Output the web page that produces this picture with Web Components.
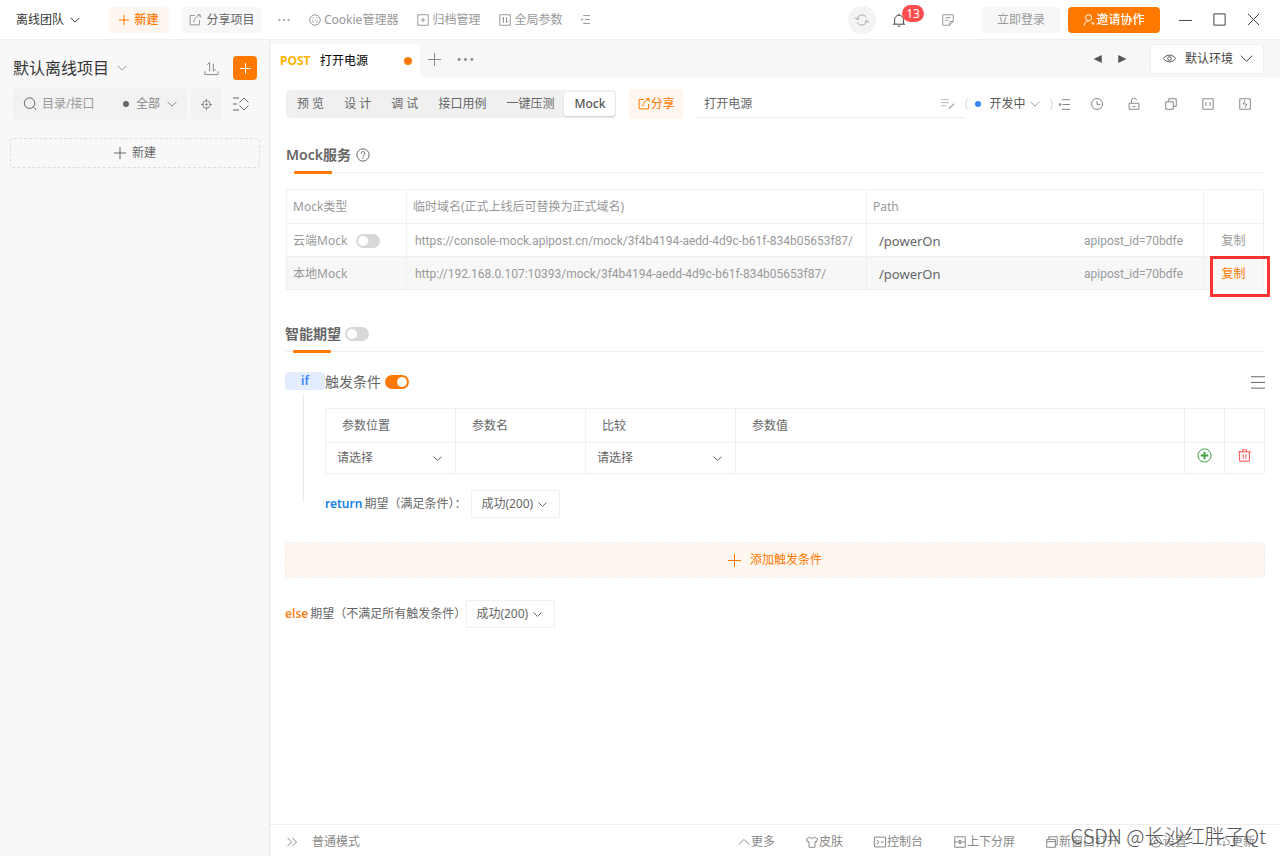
<!DOCTYPE html>
<html lang="zh-CN">
<head>
<meta charset="utf-8">
<title>打开电源 - Mock</title>
<style>
  html, body { margin: 0; height: 100%; }
  body {
    font: 12px/18px "Noto Sans", "Noto Sans CJK SC", sans-serif;
    color: #666;
    background: #fff;
    --accent: #ff7800;
    --line: #f0f0f0;
  }
</style>
</head>
<body>
<ap-app>
  <ap-topbar slot="top"></ap-topbar>
  <ap-sidebar slot="side"></ap-sidebar>
  <ap-tabs></ap-tabs>
  <ap-toolbar></ap-toolbar>
  <ap-section class="first">
    <span slot="title">Mock服务</span>
    <ap-icon slot="extra" name="help" size="14"></ap-icon>
    <ap-mock-table></ap-mock-table>
  </ap-section>
  <ap-section class="second">
    <span slot="title">智能期望</span>
    <ap-switch slot="extra" label="智能期望"></ap-switch>
    <ap-rules></ap-rules>
  </ap-section>
  <ap-statusbar slot="bottom"></ap-statusbar>
</ap-app>

<script>
const BASE = `
  :host, *, *::before, *::after { box-sizing: border-box; }
  button, input, select { font: inherit; color: inherit; border: 0; background: none; margin: 0; padding: 0; outline: 0; }
  button { display: inline-flex; align-items: center; justify-content: center; white-space: nowrap; cursor: pointer; }
  a { color: inherit; text-decoration: none; }
`;

function define(name, css, html, setup) {
  const template = document.createElement('template');
  template.innerHTML = `<style>${BASE}${css}</style>${html}`;
  customElements.define(name, class extends HTMLElement {
    constructor() {
      super();
      this.attachShadow({ mode: 'open' }).append(template.content.cloneNode(true));
    }
    connectedCallback() { if (setup) setup(this, this.shadowRoot); }
  });
}

const ICONS = {
  down: '<path d="M1 4.500l7 7 7-7"/>',
  up: '<path d="M1 11.500l7-7 7 7"/>',
  plus: '<path d="M8 0v16M0 8h16"/>',
  dots: '<g fill="currentColor" stroke="none"><circle cx="2" cy="8" r="1.400"/><circle cx="8" cy="8" r="1.400"/><circle cx="14" cy="8" r="1.400"/></g>',
  share: '<path d="M8 2H1.500v12.500H14V8M11 1h4v4M14.500 1.500C10 3 7 6 6 11"/>',
  cookie: '<circle cx="8" cy="8" r="7"/><path d="M4.500 5.500l2-1.500M9.500 4l2 1.500M4.500 8.500l1.500 3M8 7.500l1 1.500M11.500 9L10 12"/>',
  archive: '<path d="M1 1h14v14H1zM8 5v6M5 8h6"/>',
  params: '<path d="M1 1h14v14H1zM6 12V4.500L4 6.500M10 4v7.500l2-2"/>',
  indent: '<path d="M4 1h12M7 8h9M4 15h12"/><path d="M0 6l5 2-5 2z" fill="currentColor" stroke="none"/>',
  outdent: '<path d="M4 1h12M5 8h11M4 15h12"/><path d="M0 5.500l4 2.500-4 2.500z" fill="currentColor" stroke="none"/>',
  sync: '<path d="M2.200 7A6 6 0 0 1 13.200 5M13.800 9A6 6 0 0 1 2.800 11M0 5l2.200 2.500L5 6M16 11l-2.200-2.500L11 10"/>',
  bell: '<path d="M3 12.500V7.500a5 5 0 0 1 10 0v5M1 12.800h14M8 2.500V.800M6.500 15h3"/>',
  note: '<path d="M15 9.500V1H1v14h9.500zM10.500 15v-5H15M4.500 5h7M4.500 8.500h4"/>',
  user: '<circle cx="7.500" cy="5" r="4"/><path d="M1.500 15.500c.5-4 3-6.500 6-6.500M10.500 12h4.500M13 15l2-2.500"/>',
  minimize: '<path d="M1 9h14"/>',
  maximize: '<path d="M2 2h12v12H2z"/>',
  close: '<path d="M2 2l12 12M14 2L2 14"/>',
  transfer: '<path d="M1 11v3.500h14V11M6 11V1.500L3.500 4M10 3v8l2.500-2.500"/>',
  search: '<circle cx="7.500" cy="7" r="6"/><path d="M12 11.500l3.500 3.500"/>',
  target: '<circle cx="8" cy="8" r="5.500"/><circle cx="8" cy="8" r="1.200" fill="currentColor"/><path d="M8 0v4M8 12v4M0 8h4M12 8h4"/>',
  collapse: '<path d="M0 2h6M0 8h4M0 14h6M6.500 6.500L11 2l4.500 4.500M6.500 9.500L11 14l4.500-4.500"/>',
  left: '<path d="M14 1.500v13L1 8z" fill="currentColor" stroke="none"/>',
  right: '<path d="M2 1.500v13L15 8z" fill="currentColor" stroke="none"/>',
  eye: '<path d="M.500 8C4 2.500 12 2.500 15.500 8 12 13.500 4 13.500.500 8z"/><circle cx="8" cy="8" r="2.300"/>',
  edit: '<path d="M0 3h9M0 6.500h9M0 10h6"/><path d="M8 14l1-2.500 5.500-4.500 1.300 1.300L10.500 13z" fill="currentColor" stroke="none"/>',
  clock: '<circle cx="8" cy="8" r="7.300"/><path d="M8 4v4.500h4.500"/>',
  lock: '<path d="M1.500 7h13v8h-13zM4.500 7V4.500a3.500 3.500 0 0 1 7-1.500M6 11.500h4"/>',
  copy: '<path d="M1 5h10v10H1zM5 5V1h10v10h-4"/>',
  code: '<path d="M1 1h14v14H1zM6.500 5.500L4 8l2.500 2.500M9.500 5.500L12 8l-2.500 2.500"/>',
  bolt: '<path d="M1 1h14v14H1z"/><path d="M8 3L5.500 8h5L8 13"/>',
  help: '<circle cx="8" cy="8" r="7"/><path d="M5.800 6.300a2.200 2.200 0 1 1 3.300 1.900c-.8.500-1.100.9-1.100 1.600M8 11v1.500"/>',
  menu: '<path d="M0 2h16M0 8.500h16M0 15h16"/>',
  add: '<circle cx="8" cy="8" r="7"/><path d="M8 4v8M4 8h8" stroke-width="2"/>',
  trash: '<path d="M0 3.500h16M2 3.500V15h12V3.500M5.500 3.500V1h5v2.500M6.300 6.500v5.500M9.700 6.500v5.500"/>',
  more: '<path d="M2 2.500L7.500 8 2 13.500M8.500 2.500L14 8l-5.500 5.500"/>',
  shirt: '<path d="M5 1.500L.500 4l1.500 4 2-.7V15h8V7.300l2 .7 1.500-4L11 1.500c-1 2-5 2-6 0z"/>',
  console: '<path d="M.500 1.500h15v13H.500zM3.500 5L6.500 8l-3 3M9 8h4"/>',
  split: '<path d="M1 1h14v14H1zM1 8h14M8 6v4M6.500 6h3M6.500 10h3"/>',
  window: '<path d="M1 4.500h11.500V15H1zM3.500 4.500V1H15v11h-2.500M1 7.500h11.500"/>',
  gear: '<path d="M4.500 1.500h7L15.300 8l-3.800 6.500h-7L.700 8z"/><circle cx="8" cy="8" r="2.500"/>',
  update: '<path d="M4 11.500a3.500 3.500 0 0 1 0-7 4.500 4.500 0 0 1 8.500 1A3 3 0 0 1 12 11.500M8 6.500v7M5.500 11L8 13.500l2.500-2.500"/>'
};

/* Line icon on a 16-unit grid; size is the drawn side in pixels. */
define('ap-icon', `
  :host { display: inline-flex; flex: none; }
  svg { display: block; fill: none; stroke: currentColor; overflow: visible; }
`, '<svg viewBox="0 0 16 16" aria-hidden="true"></svg>', (el, root) => {
  const size = +(el.getAttribute('size') || 12);
  const svg = root.querySelector('svg');
  svg.setAttribute('width', size);
  svg.setAttribute('height', size);
  svg.setAttribute('stroke-width', 16 / size);
  svg.innerHTML = ICONS[el.getAttribute('name')];
});

define('ap-switch', `
  :host { display: inline-flex; flex: none; }
  input { appearance: none; display: flex; width: 24px; height: 14px; padding: 2px; border-radius: 7px; background: #d8d8d8; cursor: pointer; }
  input::before { content: ""; width: 10px; height: 10px; border-radius: 5px; background: #fff; }
  input:checked { background: var(--accent); justify-content: flex-end; }
`, '<input type="checkbox" role="switch">', (el, root) => {
  const input = root.querySelector('input');
  input.setAttribute('aria-label', el.getAttribute('label'));
  input.checked = el.hasAttribute('on');
});

/* Drop-down whose arrow shares the select's grid cell. */
define('ap-select', `
  :host { display: inline-grid; align-items: center; --gap: 16px; --arrow-color: currentColor; }
  select { grid-area: 1 / 1; appearance: none; width: 100%; height: 100%; padding-right: var(--gap); cursor: pointer; }
  ap-icon { grid-area: 1 / 1; justify-self: end; pointer-events: none; color: var(--arrow-color); }
`, '<select><option></option></select><ap-icon name="down" size="10"></ap-icon>', (el, root) => {
  root.querySelector('option').textContent = el.getAttribute('value');
  root.querySelector('select').setAttribute('aria-label', el.getAttribute('label'));
  if (el.hasAttribute('arrow')) {
    const icon = document.createElement('ap-icon');
    icon.setAttribute('name', 'down');
    icon.setAttribute('size', el.getAttribute('arrow'));
    root.querySelector('ap-icon').replaceWith(icon);
  }
});

define('ap-app', `
  :host { display: grid; grid-template: auto 1fr / 270px minmax(0, 1fr); min-height: 100vh; }
  header { grid-column: 1 / 3; }
  aside { background: #f8f8f8; border-right: 1px solid #e8e8e8; }
  .work { display: flex; flex-direction: column; min-width: 0; }
  main { flex: 1; }
`, `
  <header><slot name="top"></slot></header>
  <aside><slot name="side"></slot></aside>
  <div class="work"><main><slot></slot></main><slot name="bottom"></slot></div>
`);

define('ap-topbar', `
  :host { display: flex; align-items: center; height: 40px; border-bottom: 1px solid #eee; padding: 0 19px 0 16px; color: #999; }
  .team { color: #333; --gap: 15px; margin-right: 29px; }
  .btn { height: 26px; border-radius: 4px; gap: 5px; }
  .new { width: 60px; color: var(--accent); background: #fff6f0; margin-right: 13px; font-weight: 500; }
  .share { width: 80px; color: #666; background: #f7f7f7; margin-right: 16px; }
  .share ap-icon { color: #999; }
  nav { display: flex; gap: 19px; align-items: center; }
  nav button { gap: 3px; }
  .right { margin-left: auto; display: flex; align-items: center; }
  .sync { width: 28px; height: 28px; border-radius: 14px; background: #f4f4f4; color: #aaa; margin-right: 16px; }
  .bell { position: relative; color: #444; margin-right: 36px; }
  .badge { position: absolute; left: 10px; top: -8px; height: 17px; width: 22px; border-radius: 9px; background: #ff4d4f; color: #fff; line-height: 17px; text-align: center; }
  .login { width: 78px; background: #f7f7f7; margin: 0 8px 0 28px; }
  .invite { width: 92px; background: var(--accent); color: #fff; gap: 1px; margin-right: 18px; font-weight: 500; }
  .win { display: flex; gap: 19px; color: #444; }
`, `
  <ap-select class="team" value="离线团队" label="团队"></ap-select>
  <button class="btn new"><ap-icon name="plus" size="10"></ap-icon>新建</button>
  <button class="btn share"><ap-icon name="share" size="12"></ap-icon>分享项目</button>
  <nav>
    <button aria-label="更多"><ap-icon name="dots" size="12"></ap-icon></button>
    <button><ap-icon name="cookie" size="12"></ap-icon>Cookie管理器</button>
    <button><ap-icon name="archive" size="12"></ap-icon>归档管理</button>
    <button><ap-icon name="params" size="12"></ap-icon>全局参数</button>
    <button aria-label="收起"><ap-icon name="indent" size="9"></ap-icon></button>
  </nav>
  <div class="right">
    <button class="sync" aria-label="同步"><ap-icon name="sync" size="14"></ap-icon></button>
    <button class="bell" aria-label="消息 13"><ap-icon name="bell" size="14"></ap-icon><span class="badge">13</span></button>
    <button aria-label="文档"><ap-icon name="note" size="12"></ap-icon></button>
    <button class="btn login">立即登录</button>
    <button class="btn invite"><ap-icon name="user" size="12"></ap-icon>邀请协作</button>
    <div class="win">
      <button aria-label="最小化"><ap-icon name="minimize" size="15"></ap-icon></button>
      <button aria-label="最大化"><ap-icon name="maximize" size="15"></ap-icon></button>
      <button aria-label="关闭"><ap-icon name="close" size="15"></ap-icon></button>
    </div>
  </div>
`);

define('ap-sidebar', `
  :host { display: block; padding: 16px 9px 0 10px; }
  .title { display: flex; align-items: center; height: 24px; padding: 0 3px; }
  .project { font-size: 16px; color: #333; --gap: 17px; --arrow-color: #999; height: 24px; }
  .transfer { margin-left: auto; margin-right: 14px; color: #888; }
  .add { width: 24px; height: 24px; border-radius: 4px; background: var(--accent); color: #fff; }
  .find { display: flex; align-items: center; gap: 4px; padding: 0 3px; margin: 8px 0 18px; height: 32px; }
  .box { flex: 1; min-width: 0; display: flex; align-items: center; height: 32px; padding: 0 10px; border-radius: 4px; background: #f2f2f2; }
  .box input { flex: 1; width: 0; margin-left: 5px; }
  .box input::placeholder { color: #999; opacity: 1; }
  .dot { width: 6px; height: 6px; border-radius: 3px; background: #666; margin-right: 7px; }
  .all { color: #888; --gap: 16px; }
  .aim { width: 30px; height: 32px; border-radius: 4px; background: #f2f2f2; color: #888; }
  .fold { width: 32px; color: #666; }
  .new { width: 100%; height: 30px; border: 1px dashed #ddd; border-radius: 4px; gap: 6px; }
`, `
  <div class="title">
    <ap-select class="project" value="默认离线项目" label="项目"></ap-select>
    <button class="transfer" aria-label="导入导出"><ap-icon name="transfer" size="15"></ap-icon></button>
    <button class="add" aria-label="新建"><ap-icon name="plus" size="11"></ap-icon></button>
  </div>
  <div class="find">
    <div class="box">
      <ap-icon name="search" size="14"></ap-icon>
      <input type="text" placeholder="目录/接口" aria-label="目录/接口">
      <span class="dot"></span>
      <ap-select class="all" value="全部" label="类型"></ap-select>
    </div>
    <button class="aim" aria-label="定位"><ap-icon name="target" size="11"></ap-icon></button>
    <button class="fold" aria-label="折叠"><ap-icon name="collapse" size="16"></ap-icon></button>
  </div>
  <button class="new"><ap-icon name="plus" size="12"></ap-icon>新建</button>
`);

define('ap-tabs', `
  :host { display: flex; align-items: center; height: 37px; background: #f7f7f7; padding-right: 16px; color: #888; }
  .tab { align-self: flex-end; width: 150px; height: 33px; padding: 0 8px 0 10px; display: flex; align-items: center; background: #fff; border-radius: 4px 4px 0 0; color: #000; margin-right: 8px; }
  b { width: 40px; color: #ffb400; }
  i { margin-left: auto; width: 8px; height: 8px; border-radius: 4px; background: var(--accent); }
  .tools { display: flex; gap: 16px; padding-top: 2px; }
  .right { margin-left: auto; display: flex; align-items: center; gap: 14px; color: #555; }
  .env { display: flex; align-items: center; gap: 9px; height: 30px; padding: 0 10px 0 12px; margin-left: 9px; background: #fff; border: 1px solid #eee; border-radius: 4px; }
  .env ap-select { --gap: 19px; color: #444; }
`, `
  <a class="tab" href="#"><b>POST</b><span>打开电源</span><i></i></a>
  <div class="tools">
    <button aria-label="新标签"><ap-icon name="plus" size="13"></ap-icon></button>
    <button aria-label="更多"><ap-icon name="dots" size="17"></ap-icon></button>
  </div>
  <div class="right">
    <button aria-label="上一个"><ap-icon name="left" size="10"></ap-icon></button>
    <button aria-label="下一个"><ap-icon name="right" size="10"></ap-icon></button>
    <div class="env"><ap-icon name="eye" size="13"></ap-icon><ap-select value="默认环境" label="环境" arrow="13"></ap-select></div>
  </div>
`);

define('ap-toolbar', `
  :host { display: flex; align-items: center; padding: 12px 16px 0 16px; height: 42px; }
  .seg { display: flex; align-items: center; height: 28px; padding: 0 1px; border-radius: 4px; background: #f0f0f0; margin-right: 13px; }
  .seg button { height: 24px; padding: 0 10px; }
  .seg .on { background: #fff; border-radius: 3px; font-weight: 500; color: #555; box-shadow: 0 1px 2px #ccc; }
  .share { width: 54px; height: 30px; border-radius: 4px; color: var(--accent); background: #fff6f0; margin-right: 13px; gap: 1px; }
  .name { flex: 1; min-width: 0; display: flex; align-items: center; height: 28px; padding: 0 10px 0 8px; border-bottom: 1px solid #eee; color: #bbb; }
  .name input { flex: 1; width: 0; color: #666; }
  .paren { color: #ddd; }
  .dot { width: 6px; height: 6px; border-radius: 3px; background: #3a84ff; margin: 0 8px 0 7px; }
  .state { --gap: 14px; --arrow-color: #999; color: #555; margin-right: 9px; }
  .toc { margin: 0 21px 0 6px; color: #888; }
  .acts { display: flex; gap: 25px; color: #888; padding-right: 13px; }
`, `
  <div class="seg">
    <button>预 览</button><button>设 计</button><button>调 试</button><button>接口用例</button><button>一键压测</button><button class="on">Mock</button>
  </div>
  <button class="share"><ap-icon name="share" size="12"></ap-icon>分享</button>
  <div class="name"><input type="text" value="打开电源" aria-label="接口名称"><ap-icon name="edit" size="14"></ap-icon></div>
  <span class="paren">(</span><span class="dot"></span>
  <ap-select class="state" value="开发中" label="状态"></ap-select>
  <span class="paren">)</span>
  <button class="toc" aria-label="目录"><ap-icon name="outdent" size="11"></ap-icon></button>
  <div class="acts">
    <button aria-label="历史"><ap-icon name="clock" size="12"></ap-icon></button>
    <button aria-label="锁定"><ap-icon name="lock" size="12"></ap-icon></button>
    <button aria-label="复制"><ap-icon name="copy" size="12"></ap-icon></button>
    <button aria-label="代码"><ap-icon name="code" size="12"></ap-icon></button>
    <button aria-label="快捷"><ap-icon name="bolt" size="12"></ap-icon></button>
  </div>
`);

define('ap-section', `
  :host { display: block; padding: 26px 16px 0; }
  :host(.second) { padding: 34px 15px 0; }
  header { display: flex; align-items: center; height: 28px; border-bottom: 1px solid var(--line); padding-bottom: 7px; gap: 5px; position: relative; margin-bottom: 16px; }
  :host(.second) header { gap: 4px; margin-bottom: 20px; }
  header::after { content: ""; position: absolute; left: 8px; bottom: -2px; width: 38px; height: 3px; border-radius: 1px; background: var(--accent); }
  h2 { margin: 0; font-size: 14px; line-height: 20px; font-weight: 600; color: #666; }
`, `
  <header><h2><slot name="title"></slot></h2><slot name="extra"></slot></header>
  <slot></slot>
`);

define('ap-mock-table', `
  :host { display: block; color: #999; }
  table { width: 100%; table-layout: fixed; border-collapse: collapse; }
  th, td { border: 1px solid var(--line); padding: 0 6px; font-weight: 400; text-align: left; height: 33px; white-space: nowrap; }
  th { height: 34px; }
  td { padding-top: 2px; }
  .kind { display: flex; align-items: center; gap: 9px; }
  .url { padding-left: 8px; }
  .url, .path span { font-family: Roboto, "Noto Sans", sans-serif; }
  .path { display: flex; justify-content: space-between; padding: 0 14px 0 6px; }
  .path b { font-weight: 400; font-size: 13px; color: #666; }
  .last { position: relative; text-align: center; padding: 2px 16px 0; }
  tr.hot { background: #f7f7f7; }
  .hot button { color: var(--accent); }
  .mark { position: absolute; left: 6px; top: -1px; width: 60px; height: 41px; border: 3px solid #ff3333; pointer-events: none; }
`, `
  <table>
    <colgroup><col style="width:120px"><col style="width:460px"><col><col style="width:60px"></colgroup>
    <thead><tr><th>Mock类型</th><th>临时域名(正式上线后可替换为正式域名)</th><th>Path</th><th></th></tr></thead>
    <tbody>
      <tr><td><div class="kind">云端Mock<ap-switch label="云端Mock"></ap-switch></div></td>
        <td class="url">https://console-mock.apipost.cn/mock/3f4b4194-aedd-4d9c-b61f-834b05653f87/</td>
        <td><div class="path"><b>/powerOn</b><span>apipost_id=70bdfe</span></div></td>
        <td class="last"><button>复制</button></td></tr>
      <tr class="hot"><td>本地Mock</td>
        <td class="url">http://192.168.0.107:10393/mock/3f4b4194-aedd-4d9c-b61f-834b05653f87/</td>
        <td><div class="path"><b>/powerOn</b><span>apipost_id=70bdfe</span></div></td>
        <td class="last"><button>复制</button><span class="mark"></span></td></tr>
    </tbody>
  </table>
`);

define('ap-rules', `
  :host { display: block; }
  .rule { display: grid; grid-template-columns: 40px minmax(0, 1fr); }
  .if { height: 18px; border-radius: 4px; background: #e3edff; color: #3a84ff; font-weight: 600; text-align: center; }
  .rail { width: 1px; margin: 2px 0 16px 18px; background: #e8e8e8; }
  .cond { display: flex; align-items: center; height: 20px; gap: 4px; font-size: 14px; }
  .cond button { margin-left: auto; }
  table { width: 100%; table-layout: fixed; border-collapse: collapse; margin: 16px 0; }
  th, td { border: 1px solid var(--line); font-weight: 400; text-align: left; padding: 0; height: 31px; }
  th { height: 34px; padding: 0 16px; }
  td > ap-select { display: grid; height: 30px; padding: 0 13px 0 11px; }
  td input { width: 100%; height: 30px; padding: 0 11px; }
  td > button { width: 100%; height: 30px; padding-bottom: 6px; }
  .green { color: #43a047; } .red { color: #ff4d4f; }
  .then { display: flex; align-items: center; height: 28px; }
  .then ap-select { height: 28px; border: 1px solid var(--line); padding: 0 12px 0 9px; --gap: 14px; }
  b { font-weight: 600; margin-right: 2px; }
  .ret { color: #1682e6; }
  .ret + span { margin-right: 5px; }
  .else { color: #fa8320; }
  .add { width: 100%; height: 36px; margin: 24px 0 22px; border: 1px dashed #eee; border-radius: 4px; background: #fff6f0; color: var(--accent); gap: 9px; }
`, `
  <div class="rule">
    <div class="if">if</div>
    <div class="cond"><span>触发条件</span><ap-switch label="触发条件" on></ap-switch><button aria-label="菜单"><ap-icon name="menu" size="14"></ap-icon></button></div>
    <div class="rail"></div>
    <div>
      <table>
        <colgroup><col style="width:130px"><col style="width:130px"><col style="width:150px"><col><col style="width:40px"><col style="width:40px"></colgroup>
        <thead><tr><th>参数位置</th><th>参数名</th><th>比较</th><th>参数值</th><th></th><th></th></tr></thead>
        <tbody><tr>
          <td><ap-select value="请选择" label="参数位置" arrow="9"></ap-select></td>
          <td><input type="text" aria-label="参数名"></td>
          <td><ap-select value="请选择" label="比较" arrow="9"></ap-select></td>
          <td><input type="text" aria-label="参数值"></td>
          <td><button class="green" aria-label="添加"><ap-icon name="add" size="15"></ap-icon></button></td>
          <td><button class="red" aria-label="删除"><ap-icon name="trash" size="13"></ap-icon></button></td>
        </tr></tbody>
      </table>
      <div class="then"><b class="ret">return</b><span>期望（满足条件）：</span><ap-select value="成功(200)" label="期望" arrow="9"></ap-select></div>
    </div>
  </div>
  <button class="add"><ap-icon name="plus" size="13"></ap-icon>添加触发条件</button>
  <div class="then"><b class="else">else</b><span>期望（不满足所有触发条件）</span><ap-select value="成功(200)" label="else 期望" arrow="9"></ap-select></div>
`);

define('ap-statusbar', `
  :host { display: flex; align-items: center; position: relative; height: 32px; border-top: 1px solid #eee; padding: 2px 25px 0 16px; color: #888; }
  .mode { gap: 14px; }
  nav { margin-left: auto; display: flex; gap: 31px; }
  nav button { gap: 1px; }
  .by { position: absolute; right: 14px; bottom: 7px; font: 300 20px/26px "Noto Sans CJK SC", sans-serif; color: #555; pointer-events: none; }
`, `
  <button class="mode"><ap-icon name="more" size="12"></ap-icon>普通模式</button>
  <nav>
    <button><ap-icon name="up" size="12"></ap-icon>更多</button>
    <button><ap-icon name="shirt" size="12"></ap-icon>皮肤</button>
    <button><ap-icon name="console" size="12"></ap-icon>控制台</button>
    <button><ap-icon name="split" size="12"></ap-icon>上下分屏</button>
    <button><ap-icon name="window" size="12"></ap-icon>新窗口打开</button>
    <button><ap-icon name="gear" size="12"></ap-icon>设置</button>
    <button><ap-icon name="update" size="12"></ap-icon>更新</button>
  </nav>
  <span class="by">CSDN @长沙红胖子Qt</span>
`);
</script>
</body>
</html>
